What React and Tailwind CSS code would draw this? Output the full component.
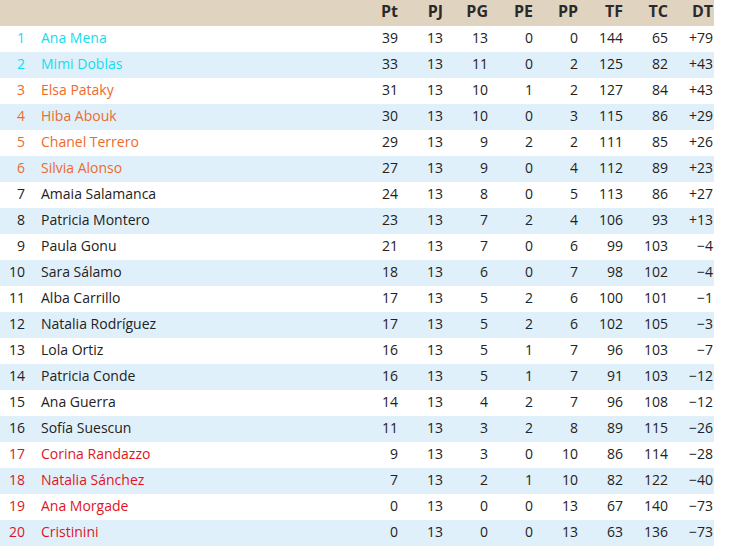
const cols = ['Pt', 'PJ', 'PG', 'PE', 'PP', 'TF', 'TC', 'DT']

const rows = [
  ['Ana Mena', 39, 13, 13, 0, 0, 144, 65, '+79'],
  ['Mimi Doblas', 33, 13, 11, 0, 2, 125, 82, '+43'],
  ['Elsa Pataky', 31, 13, 10, 1, 2, 127, 84, '+43'],
  ['Hiba Abouk', 30, 13, 10, 0, 3, 115, 86, '+29'],
  ['Chanel Terrero', 29, 13, 9, 2, 2, 111, 85, '+26'],
  ['Silvia Alonso', 27, 13, 9, 0, 4, 112, 89, '+23'],
  ['Amaia Salamanca', 24, 13, 8, 0, 5, 113, 86, '+27'],
  ['Patricia Montero', 23, 13, 7, 2, 4, 106, 93, '+13'],
  ['Paula Gonu', 21, 13, 7, 0, 6, 99, 103, '−4'],
  ['Sara Sálamo', 18, 13, 6, 0, 7, 98, 102, '−4'],
  ['Alba Carrillo', 17, 13, 5, 2, 6, 100, 101, '−1'],
  ['Natalia Rodríguez', 17, 13, 5, 2, 6, 102, 105, '−3'],
  ['Lola Ortiz', 16, 13, 5, 1, 7, 96, 103, '−7'],
  ['Patricia Conde', 16, 13, 5, 1, 7, 91, 103, '−12'],
  ['Ana Guerra', 14, 13, 4, 2, 7, 96, 108, '−12'],
  ['Sofía Suescun', 11, 13, 3, 2, 8, 89, 115, '−26'],
  ['Corina Randazzo', 9, 13, 3, 0, 10, 86, 114, '−28'],
  ['Natalia Sánchez', 7, 13, 2, 1, 10, 82, 122, '−40'],
  ['Ana Morgade', 0, 13, 0, 0, 13, 67, 140, '−73'],
  ['Cristinini', 0, 13, 0, 0, 13, 63, 136, '−73'],
]

function nameColor(pos) {
  if (pos <= 2) return 'text-[#14dcee]'
  if (pos <= 6) return 'text-[#ee6a2c]'
  if (pos >= 17) return 'text-[#e0141e]'
  return 'text-[#222222]'
}

export default function App() {
  return (
    <div className="bg-white w-[729px] h-[547px] font-['Open_Sans',sans-serif] text-[14px]">
      <div className="w-[714px]">
        <div className="flex h-[26px] leading-[22px] bg-[#e0d4c1] font-bold text-[16px] text-[#2a2a2a]">
          <div className="flex-1" />
          {cols.map((c) => (
            <div key={c} className="w-[45px] text-right pr-px">
              {c}
            </div>
          ))}
        </div>

        {rows.map((r, i) => {
          const pos = i + 1
          const color = nameColor(pos)
          return (
            <div
              key={r[0]}
              className={`flex h-[26px] leading-[23px] text-[#222222] ${i % 2 ? 'bg-[#e0f0fb]' : 'bg-white'}`}
            >
              <div className={`w-[25px] text-right ${color}`}>{pos}</div>
              <div className={`flex-1 pl-4 ${color}`}>{r[0]}</div>
              {r.slice(1).map((v, j) => (
                <div key={j} className="w-[45px] text-right pr-px">
                  {v}
                </div>
              ))}
            </div>
          )
        })}
      </div>
    </div>
  )
}
